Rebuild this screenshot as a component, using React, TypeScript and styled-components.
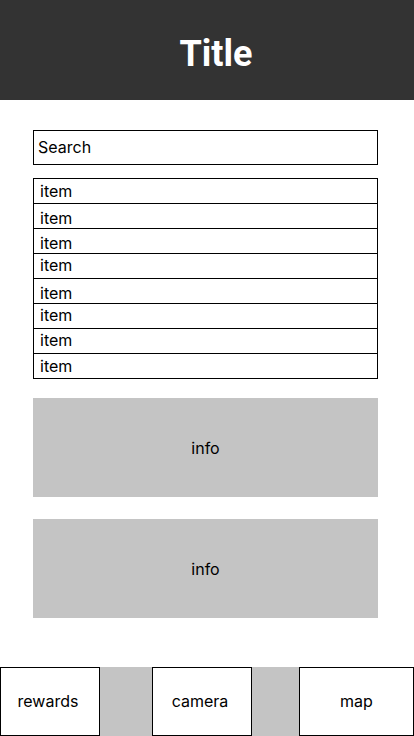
import React from "react";
import styled, { createGlobalStyle } from "styled-components";

const Global = createGlobalStyle`
  html, body { margin: 0; padding: 0; background: #ffffff; }
  body { font-family: Inter, "Noto Sans", sans-serif; color: #000; overflow: hidden; }
  * { box-sizing: border-box; }
`;

const Page = styled.div`
  width: 414px;
  height: 736px;
  display: flex;
  flex-direction: column;
  background: #fff;
`;

const Header = styled.header`
  height: 100px;
  flex: none;
  background: #333333;
  display: flex;
  align-items: center;
  justify-content: center;
  padding: 7px 0 0 18px;
`;

const Title = styled.h1`
  margin: 0;
  font-family: Roboto, "Liberation Sans", sans-serif;
  font-weight: 700;
  font-size: 36px;
  color: #ffffff;
`;

const Main = styled.main`
  flex: 1;
  display: flex;
  flex-direction: column;
  padding: 30px 36px 0 33px;
`;

const Search = styled.div`
  height: 35px;
  border: 1px solid #000;
  display: flex;
  align-items: center;
  padding: 0 0 2px 4px;
  font-size: 16px;
  margin-bottom: 13px;
`;

const List = styled.div`
  border: 1px solid #000;
  display: flex;
  flex-direction: column;
  margin-bottom: 19px;
`;

const Row = styled.div<{ $offset: number }>`
  height: 24px;
  display: flex;
  align-items: flex-start;
  padding: ${(p) => p.$offset}px 0 0 6px;
  font-size: 16px;
  line-height: 20px;
  & + & {
    height: 25px;
    border-top: 1px solid #000;
  }
`;

const Info = styled.div<{ $gap: number }>`
  height: 99px;
  background: #c4c4c4;
  display: flex;
  align-items: center;
  justify-content: center;
  font-size: 16px;
  margin-bottom: ${(p) => p.$gap}px;
`;

const Footer = styled.footer`
  height: 69px;
  flex: none;
  background: #c4c4c4;
  display: grid;
  grid-template-columns: 100px 52px 100px 47px 115px;
`;

const Tab = styled.div<{ $col: number; $shift: number }>`
  grid-column: ${(p) => p.$col};
  background: #fff;
  border: 1px solid #000;
  display: flex;
  align-items: center;
  justify-content: center;
  padding: 0 ${(p) => p.$shift}px 2px 0;
  font-size: 16px;
`;

const offsets = [2, 4, 4, 1, 4, 1, 1, 2];

export default function App() {
  return (
    <Page>
      <Global />
      <Header>
        <Title>Title</Title>
      </Header>
      <Main>
        <Search>Search</Search>
        <List>
          {offsets.map((o, i) => (
            <Row key={i} $offset={o}>
              item
            </Row>
          ))}
        </List>
        <Info $gap={22}>info</Info>
        <Info $gap={0}>info</Info>
      </Main>
      <Footer>
        <Tab $col={1} $shift={4}>rewards</Tab>
        <Tab $col={3} $shift={4}>camera</Tab>
        <Tab $col={5} $shift={0}>map</Tab>
      </Footer>
    </Page>
  );
}
